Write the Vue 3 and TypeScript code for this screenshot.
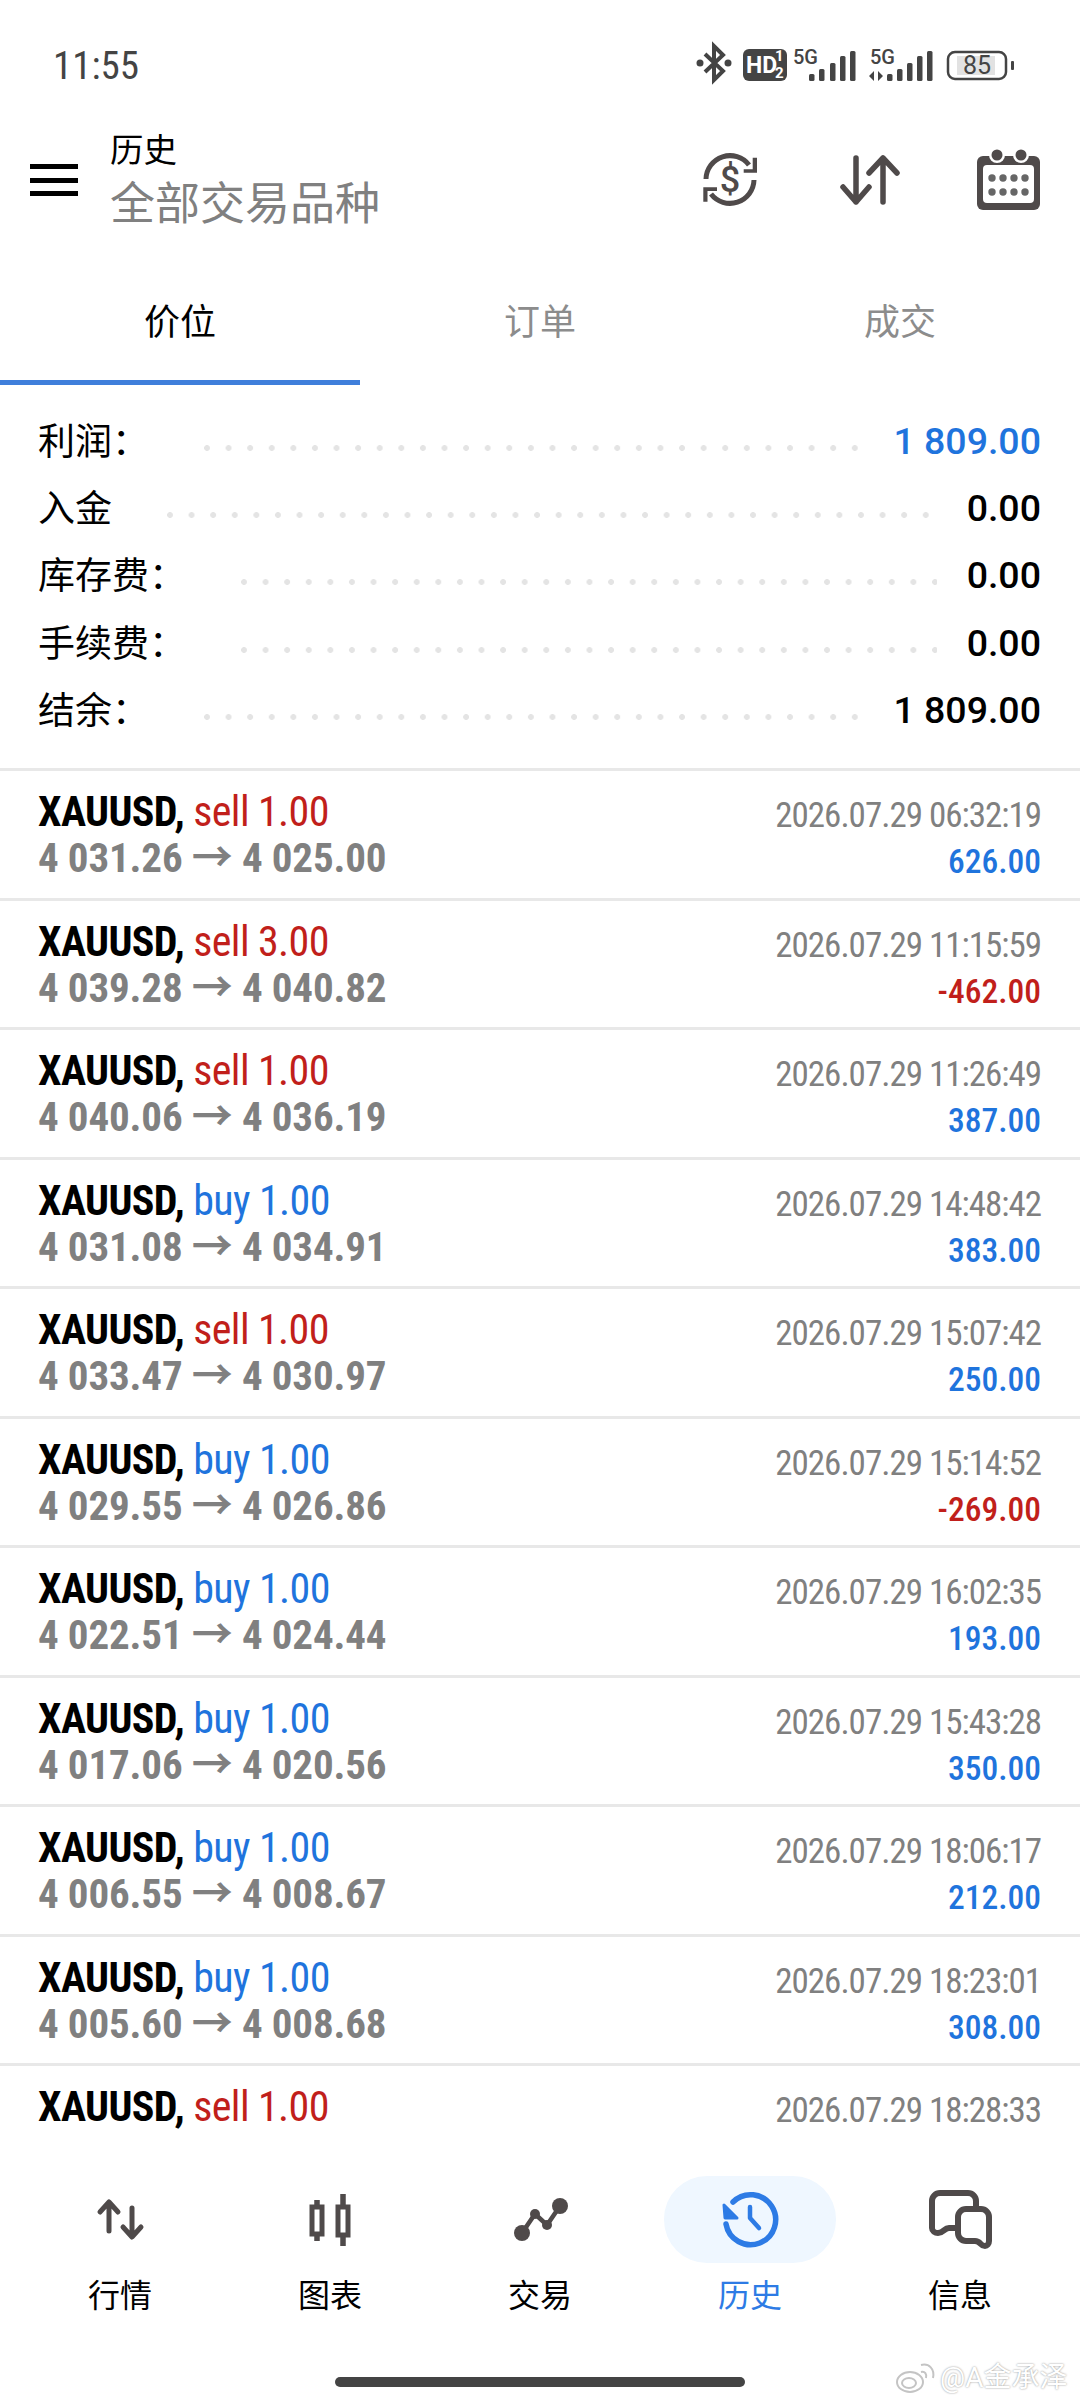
<template>
  <div class="screen">
    <div class="status">
      <span class="clock">11:55</span>
      <svg class="status-icons" width="330" height="45" viewBox="0 0 330 45">
        <path d="M15 13 33 30 24 39V5l9 9L15 31" fill="none" stroke="#444" stroke-width="4" />
        <circle cx="10" cy="22" r="3.5" fill="#444" />
        <circle cx="38" cy="22" r="3.5" fill="#444" />
        <rect x="53" y="8" width="44" height="32" rx="6" fill="#444" />
        <text x="56" y="32" class="st-hd">HD</text>
        <text x="85" y="20" class="st-frac">1</text>
        <text x="85" y="37" class="st-frac">2</text>
        <text x="103" y="23" class="st-5g">5G</text>
        <g fill="#444">
          <rect v-for="b in bars1" :key="b.x" :x="b.x" :y="b.y" width="5.5" :height="40 - b.y" rx="1.5" />
        </g>
        <text x="180" y="23" class="st-5g">5G</text>
        <path d="M184 30v10l-5-5zM188 30v10l5-5z" fill="#444" />
        <g fill="#444">
          <rect v-for="b in bars2" :key="b.x" :x="b.x" :y="b.y" width="5.5" :height="40 - b.y" rx="1.5" />
        </g>
        <rect x="258" y="11" width="58" height="27" rx="7" fill="none" stroke="#444" stroke-width="2.5" />
        <rect x="267" y="15" width="38" height="19" fill="#e2e2e2" />
        <text x="287" y="33" class="st-batt" text-anchor="middle">85</text>
        <rect x="321" y="20" width="3" height="9" rx="1" fill="#444" />
      </svg>
    </div>

    <header class="header">
      <div class="burger"><i></i><i></i><i></i></div>
      <div class="titles">
        <div class="title">历史</div>
        <div class="subtitle">全部交易品种</div>
      </div>
      <div class="actions">
        <svg width="64" height="64" viewBox="0 0 64 64">
          <g fill="none" stroke="#4f4a4a" stroke-width="5">
            <path d="M7 31A24 24 0 0 1 50 17" />
            <path d="M55 32A24 24 0 0 1 12 46" />
          </g>
          <path d="M53.7 9.7H58v15H44.7v-3.4h9zM4.3 39.3H18V43H8.5v10.7H4.3z" fill="#4f4a4a" />
          <text x="31" y="44" class="dollar" text-anchor="middle">$</text>
        </svg>
        <svg width="60" height="52" viewBox="0 0 60 52">
          <g fill="none" stroke="#4f4a4a" stroke-width="5.5" stroke-linecap="round" stroke-linejoin="round">
            <path d="M16 4v44M3 33l13 15 13-15" />
            <path d="M43 48V4M29 19 43 4l14 15" />
          </g>
        </svg>
        <svg width="64" height="64" viewBox="0 0 64 64">
          <rect x="0" y="8" width="63" height="54" rx="6" fill="#4f4a4a" />
          <rect x="6" y="17" width="51" height="38" rx="4" fill="#fff" />
          <circle cx="20" cy="7" r="8" fill="#fff" />
          <circle cx="44" cy="7" r="8" fill="#fff" />
          <circle cx="20" cy="7" r="5.5" fill="#4f4a4a" />
          <circle cx="44" cy="7" r="5.5" fill="#4f4a4a" />
          <g fill="#666">
            <template v-for="y in [30, 44]" :key="y">
              <circle v-for="x in [15, 26, 37, 48]" :key="x" :cx="x" :cy="y" r="3.7" />
            </template>
          </g>
        </svg>
      </div>
    </header>

    <div class="tabs">
      <div class="tab active">价位</div>
      <div class="tab">订单</div>
      <div class="tab">成交</div>
    </div>

    <section class="summary">
      <div v-for="s in summary" :key="s.label" class="sum-row">
        <span class="sum-label">{{ s.label }}</span>
        <span class="dots"></span>
        <span class="sum-value" :class="{ blue: s.blue }">{{ s.value }}</span>
      </div>
    </section>

    <div class="deals">
      <div v-for="d in deals" :key="d.time" class="deal">
        <div class="deal-left">
          <div class="deal-top">
            <span class="sym">XAUUSD,</span>{{ " " }}<span :class="d.side === 'sell' ? 'red' : 'blue'">{{ d.side }} {{ d.vol }}</span>
          </div>
          <div v-if="d.open" class="prices">{{ d.open }} → {{ d.close }}</div>
        </div>
        <div class="deal-right">
          <div class="time">{{ d.time }}</div>
          <div v-if="d.profit" class="profit" :class="d.profit.startsWith('-') ? 'red' : 'blue'">{{ d.profit }}</div>
        </div>
      </div>
    </div>

    <nav class="nav">
      <div class="nav-item">
        <div class="nav-icon">
          <svg width="172" height="87" viewBox="0 0 172 87" fill="none" stroke="#4f4a4a" stroke-width="5" stroke-linecap="round" stroke-linejoin="round">
            <path d="M75 55V27M66 36l9-10 9 10" />
            <path d="M98 32v28M89 51l9 10 9-10" />
          </svg>
        </div>
        <span>行情</span>
      </div>
      <div class="nav-item">
        <div class="nav-icon">
          <svg width="172" height="87" viewBox="0 0 172 87" fill="none" stroke="#4f4a4a">
            <path d="M73 24v5M73 60v5M99 18v11M99 61v9" stroke-width="5.5" />
            <rect x="68" y="31" width="10" height="27" stroke-width="5" />
            <rect x="94" y="31" width="10" height="28" stroke-width="5" />
          </svg>
        </div>
        <span>图表</span>
      </div>
      <div class="nav-item">
        <div class="nav-icon">
          <svg width="172" height="87" viewBox="0 0 172 87">
            <path d="M68 57 81 38 93 49 106 30" fill="none" stroke="#4f4a4a" stroke-width="4.5" />
            <g fill="#4f4a4a">
              <circle cx="68" cy="57" r="8" />
              <circle cx="106" cy="30" r="8" />
              <circle cx="81" cy="38" r="5" />
              <circle cx="93" cy="49" r="5" />
            </g>
          </svg>
        </div>
        <span>交易</span>
      </div>
      <div class="nav-item current">
        <div class="nav-icon">
          <svg width="172" height="87" viewBox="0 0 172 87" fill="none" stroke="#2d7be5" stroke-width="5.5" stroke-linecap="round" stroke-linejoin="round">
            <path d="M62 48A25 25 0 1 0 69 26" />
            <path d="M60 29 61 42 73 42z" fill="#2d7be5" stroke-width="3" />
            <path d="M86 31V42L95 52" stroke-width="4.5" />
          </svg>
        </div>
        <span>历史</span>
      </div>
      <div class="nav-item">
        <div class="nav-icon">
          <svg width="172" height="87" viewBox="0 0 172 87" fill="none" stroke="#4f4a4a" stroke-width="6" stroke-linecap="round" stroke-linejoin="round">
            <path d="M84 52H75c-5 0-5 5-11 5-3 0-6-2-6-5V25a8 8 0 0 1 8-8h28a8 8 0 0 1 8 8v8" />
            <path d="M92 33h15a8 8 0 0 1 8 8v24c0 3-2 5-4 5-5 0-4-5-10-5h-9a8 8 0 0 1-8-8V41a8 8 0 0 1 8-8z" />
          </svg>
        </div>
        <span>信息</span>
      </div>
    </nav>

    <div class="home-bar"></div>
    <div class="watermark">
      <svg width="42" height="34" viewBox="0 0 42 34" fill="none" stroke="#c4c4c4" stroke-width="2">
        <ellipse cx="15" cy="21" rx="13" ry="10" />
        <ellipse cx="14" cy="22" rx="7" ry="5" />
        <path d="M26 11c4-1 6 2 5 6M26 4c8-2 14 4 12 13" />
      </svg>
      <span>@A金承泽</span>
    </div>
  </div>
</template>

<script setup lang="ts">
type Deal = {
  side: "buy" | "sell";
  vol: string;
  open: string;
  close: string;
  time: string;
  profit: string;
};

const bars1 = [
  { x: 119, y: 33 },
  { x: 129, y: 28 },
  { x: 140, y: 22 },
  { x: 150, y: 15 },
  { x: 160, y: 10 },
];
const bars2 = [
  { x: 197, y: 33 },
  { x: 207, y: 28 },
  { x: 217, y: 22 },
  { x: 227, y: 15 },
  { x: 237, y: 10 },
];

const summary = [
  { label: "利润：", value: "1 809.00", blue: true },
  { label: "入金", value: "0.00", blue: false },
  { label: "库存费：", value: "0.00", blue: false },
  { label: "手续费：", value: "0.00", blue: false },
  { label: "结余：", value: "1 809.00", blue: false },
];

// last row is cut by the bottom nav, only its first line shows
const deals: Deal[] = [
  { side: "sell", vol: "1.00", open: "4 031.26", close: "4 025.00", time: "2026.07.29 06:32:19", profit: "626.00" },
  { side: "sell", vol: "3.00", open: "4 039.28", close: "4 040.82", time: "2026.07.29 11:15:59", profit: "-462.00" },
  { side: "sell", vol: "1.00", open: "4 040.06", close: "4 036.19", time: "2026.07.29 11:26:49", profit: "387.00" },
  { side: "buy", vol: "1.00", open: "4 031.08", close: "4 034.91", time: "2026.07.29 14:48:42", profit: "383.00" },
  { side: "sell", vol: "1.00", open: "4 033.47", close: "4 030.97", time: "2026.07.29 15:07:42", profit: "250.00" },
  { side: "buy", vol: "1.00", open: "4 029.55", close: "4 026.86", time: "2026.07.29 15:14:52", profit: "-269.00" },
  { side: "buy", vol: "1.00", open: "4 022.51", close: "4 024.44", time: "2026.07.29 16:02:35", profit: "193.00" },
  { side: "buy", vol: "1.00", open: "4 017.06", close: "4 020.56", time: "2026.07.29 15:43:28", profit: "350.00" },
  { side: "buy", vol: "1.00", open: "4 006.55", close: "4 008.67", time: "2026.07.29 18:06:17", profit: "212.00" },
  { side: "buy", vol: "1.00", open: "4 005.60", close: "4 008.68", time: "2026.07.29 18:23:01", profit: "308.00" },
  { side: "sell", vol: "1.00", open: "", close: "", time: "2026.07.29 18:28:33", profit: "" },
];
</script>

<style scoped>
.screen {
  position: relative;
  display: flex;
  flex-direction: column;
  width: 1080px;
  height: 2403px;
  overflow: hidden;
  background: #fff;
  color: #000;
  font-family: Roboto, "Noto Sans CJK SC", sans-serif;
}

.status {
  display: flex;
  align-items: center;
  justify-content: space-between;
  flex: none;
  height: 100px;
  padding: 26px 60px 0 53px;
  box-sizing: border-box;
}
.clock {
  margin-top: 5px;
  font-size: 39px;
  font-stretch: 85%;
  color: #444;
}
.st-hd {
  font-size: 23px;
  font-weight: 700;
  fill: #fff;
}
.st-frac {
  font-size: 15px;
  font-weight: 700;
  fill: #fff;
}
.st-5g {
  font-size: 20px;
  font-weight: 500;
  fill: #444;
}
.st-batt {
  font-size: 25px;
  fill: #444;
}

.header {
  display: flex;
  align-items: center;
  flex: none;
  height: 160px;
  padding: 0 39px 0 30px;
  box-sizing: border-box;
}
.burger {
  display: flex;
  flex-direction: column;
  gap: 8.5px;
  width: 48px;
}
.burger i {
  display: block;
  height: 5px;
  background: #000;
}
.titles {
  margin: -5px 0 0 32px;
}
.title {
  font-size: 33.5px;
  line-height: 54px;
}
.subtitle {
  font-size: 45px;
  line-height: 54px;
  color: #808080;
}
.actions {
  display: flex;
  align-items: center;
  gap: 77px;
  margin-left: auto;
}
.dollar {
  font-size: 36px;
  font-weight: 500;
  fill: #4f4a4a;
}

.tabs {
  display: flex;
  flex: none;
}
.tab {
  flex: 1;
  height: 125px;
  padding-bottom: 3px;
  box-sizing: border-box;
  border-bottom: 5px solid transparent;
  display: flex;
  align-items: center;
  justify-content: center;
  font-size: 36px;
  color: #8c8c8c;
}
.tab.active {
  color: #000;
  border-bottom-color: #3f7fdb;
}

.summary {
  flex: none;
  height: 386px;
  padding: 21px 39px 0 38px;
  box-sizing: border-box;
  border-bottom: 3px solid #e8e8e8;
}
.sum-row {
  display: flex;
  align-items: center;
  height: 67.4px;
}
.sum-label {
  margin-top: -2px;
  font-size: 37px;
}
.dots {
  flex: 1;
  height: 8px;
  margin: 16px 30px 0 55px;
  background: radial-gradient(circle at 3px 4px, #e4e4e4 2.6px, transparent 3.2px) left center / 21.6px 8px repeat-x;
}
.sum-value {
  margin-top: 2px;
  font-size: 37.5px;
  font-weight: 500;
}

.deals {
  flex: 1;
  min-height: 0;
  overflow: hidden;
}
.deal {
  display: flex;
  justify-content: space-between;
  height: 129.5px;
  padding: 18px 39px 0 38px;
  box-sizing: border-box;
  border-bottom: 3px solid #e8e8e8;
}
.deal-top,
.prices {
  line-height: 46px;
  white-space: nowrap;
}
.deal-top {
  font-size: 42px;
  font-stretch: 76%;
  letter-spacing: -0.6px;
}
.sym {
  font-weight: 700;
}
.prices {
  font-size: 41px;
  font-weight: 700;
  font-stretch: 84%;
  letter-spacing: -0.15px;
  color: #808080;
}
.deal-right {
  padding-top: 4px;
  text-align: right;
}
.time {
  font-size: 35px;
  font-stretch: 77%;
  letter-spacing: -1px;
  line-height: 46px;
  color: #808080;
}
.profit {
  font-size: 33.5px;
  font-stretch: 85%;
  line-height: 45px;
  font-weight: 500;
}
.blue {
  color: #1f74dd;
}
.red {
  color: #c11f1b;
}

.nav {
  display: flex;
  flex: none;
  height: 273px;
  padding: 46px 15px 0;
  box-sizing: border-box;
  background: #fff;
}
.nav-item {
  display: flex;
  flex-direction: column;
  align-items: center;
  flex: 1;
  font-size: 32px;
  line-height: 40px;
}
.nav-icon {
  width: 172px;
  height: 87px;
  margin-bottom: 13px;
  border-radius: 43px;
}
.nav-item.current {
  color: #2d7be5;
}
.nav-item.current .nav-icon {
  background: #eff7ff;
}

.home-bar {
  position: absolute;
  left: 335px;
  top: 2377px;
  width: 410px;
  height: 10px;
  border-radius: 5px;
  background: #444;
}
.watermark {
  position: absolute;
  left: 895px;
  top: 2358px;
  display: flex;
  align-items: center;
  gap: 3px;
  white-space: nowrap;
  font-size: 28px;
  line-height: 40px;
  color: #fff;
  text-shadow: 0 0 2px #888;
}
</style>
